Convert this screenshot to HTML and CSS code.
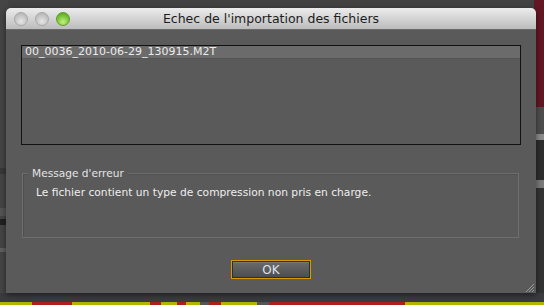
FILE: index.html
```html
<!DOCTYPE html>
<html>
<head>
  <title>Echec de l'importation des fichiers</title>
  <link rel="stylesheet" href="styles.css">
</head>
<body>
  <div class="backdrop">
    <div class="side-left">
      <div class="band b1"></div>
      <div class="band b2"></div>
      <div class="band b3"></div>
      <div class="band b4"></div>
    </div>
    <div class="side-right">
      <div class="red-panel"></div>
      <div class="band r1"></div>
      <div class="band r2"></div>
      <div class="band r3"></div>
      <div class="band r4"></div>
    </div>
  </div>

  <div class="dialog">
    <div class="titlebar">
      <div class="lights">
        <span class="light"></span>
        <span class="light"></span>
        <span class="light green"></span>
      </div>
      <div class="title">Echec de l'importation des fichiers</div>
    </div>

    <div class="content">
      <div class="file-list">
        <div class="file-row">00_0036_2010-06-29_130915.M2T</div>
      </div>

      <div class="error-box">
        <span class="legend">Message d'erreur</span>
        <p>Le fichier contient un type de compression non pris en charge.</p>
      </div>

      <div class="actions">
        <button class="ok">OK</button>
      </div>

      <svg class="grip" width="9" height="9" viewBox="0 0 9 9">
        <path d="M1 9 L9 1 M4 9 L9 4 M7 9 L9 7" stroke="#9a9a9a" stroke-width="1"/>
      </svg>
    </div>
  </div>

  <div class="timeline">
    <div class="ticks"></div>
    <div class="strip">
      <span class="seg y" style="width:32px"></span>
      <span class="seg r" style="width:40px"></span>
      <span class="seg y" style="width:78px"></span>
      <span class="seg r" style="width:11px"></span>
      <span class="seg y" style="width:16px"></span>
      <span class="seg r" style="width:9px"></span>
      <span class="seg y" style="width:14px"></span>
      <span class="seg g" style="width:9px"></span>
      <span class="seg r" style="width:12px"></span>
      <span class="seg y" style="width:36px"></span>
      <span class="seg g" style="width:12px"></span>
      <span class="seg r" style="width:136px"></span>
      <span class="seg y" style="width:139px"></span>
    </div>
  </div>
</body>
</html>
```

FILE: styles.css
```css
body {
  margin: 0;
  width: 544px;
  height: 305px;
  overflow: hidden;
  background-color: #424242;
  font-family: "DejaVu Sans", Verdana, sans-serif;
  position: relative;
}

/* app behind the dialog */
.backdrop {
  position: absolute;
  inset: 0;
}

.side-left {
  position: absolute;
  left: 0;
  top: 0;
  width: 8px;
  height: 293px;
  background-color: #454545;
}

.side-right {
  position: absolute;
  right: 0;
  top: 0;
  width: 10px;
  height: 293px;
  background-color: #333;
  display: flex;
  flex-direction: column;
}

.red-panel {
  height: 107px;
  background-color: #641623;
}

.band {
  width: 100%;
}

.b1 { position: absolute; top: 168px; height: 6px; background: #393939; }
.b2 { position: absolute; top: 208px; height: 8px; background: #555; }
.b3 { position: absolute; top: 219px; height: 6px; background: #222; }
.b4 { position: absolute; top: 248px; height: 4px; background: #606060; }

.r1 { height: 27px; background: #4e4e4e; }
.r2 { height: 6px; background: #8c8c8c; }
.r3 { height: 40px; background: #2e2e2e; }
.r4 { height: 8px; background: #7a7a7a; }

/* dialog window */
.dialog {
  position: relative;
  margin: 8px 0 0 6px;
  width: 530px;
  height: 285px;
  display: flex;
  flex-direction: column;
  box-shadow: 0 2px 6px rgba(0, 0, 0, 0.5);
  border-radius: 5px 5px 0 0;
}

.titlebar {
  height: 22px;
  display: flex;
  align-items: center;
  position: relative;
  border-radius: 5px 5px 0 0;
  background: linear-gradient(#ececec, #d4d4d4 50%, #bcbcbc);
  border-bottom: 1px solid #6a6a6a;
  box-sizing: border-box;
}

.lights {
  position: absolute;
  left: 8px;
  top: 4px;
  display: flex;
  gap: 7px;
}

.light {
  width: 14px;
  height: 14px;
  border-radius: 50%;
  box-sizing: border-box;
  border: 1px solid #a8a8a8;
  background: radial-gradient(circle at 50% 70%, #e6e6e6, #c2c2c2 60%, #b0b0b0);
}

.light.green {
  border-color: #5e9c2e;
  background: radial-gradient(circle at 50% 75%, #c4f27a, #79c43a 55%, #4f9a1c);
}

.title {
  flex: 1;
  text-align: center;
  font-size: 12.5px;
  color: #1c1c1c;
}

.content {
  flex: 1;
  background-color: #5a5a5a;
  padding: 15px 15px 0 15px;
  position: relative;
}

.file-list {
  height: 98px;
  border: 1px solid #111;
}

.file-row {
  height: 12px;
  line-height: 12px;
  padding-left: 3px;
  font-size: 11px;
  color: #ececec;
  background-color: #6b6b6b;
  border-bottom: 1px solid #555;
}

/* group box with a title on its top border */
.error-box {
  position: relative;
  margin: 28px 2px 0 1px;
  height: 63px;
  border: 1px solid #6e6e6e;
  box-shadow: inset 1px 1px 0 #505050;
}

.error-box .legend {
  position: absolute;
  left: 5px;
  top: -8px;
  padding: 0 4px;
  line-height: 14px;
  font-size: 10.6px;
  color: #e4e4e4;
  background-color: #5a5a5a;
}

.error-box p {
  margin: 12px 0 0 13px;
  font-size: 10.7px;
  color: #eeeeee;
}

.actions {
  display: flex;
  justify-content: center;
  margin-top: 22px;
}

.ok {
  width: 80px;
  height: 19px;
  padding: 0;
  border: 1px solid #d99a00;
  box-shadow: inset 0 0 0 1px #2e2e2e, inset 0 2px 0 #7a7a7a;
  background: linear-gradient(#6c6c6c, #4c4c4c);
  color: #dde4ec;
  font-family: "DejaVu Sans", Verdana, sans-serif;
  font-size: 12px;
}

.grip {
  position: absolute;
  right: 2px;
  bottom: 1px;
}

/* timeline under the dialog */
.timeline {
  height: 12px;
  display: flex;
  flex-direction: column;
}

.ticks {
  height: 9px;
  background-color: #3b3c3f;
}

.strip {
  height: 3px;
  display: flex;
}

.seg { height: 3px; }
.seg.y { background-color: #b3b600; }
.seg.r { background-color: #ad1e1e; }
.seg.g { background-color: #555; }
```
